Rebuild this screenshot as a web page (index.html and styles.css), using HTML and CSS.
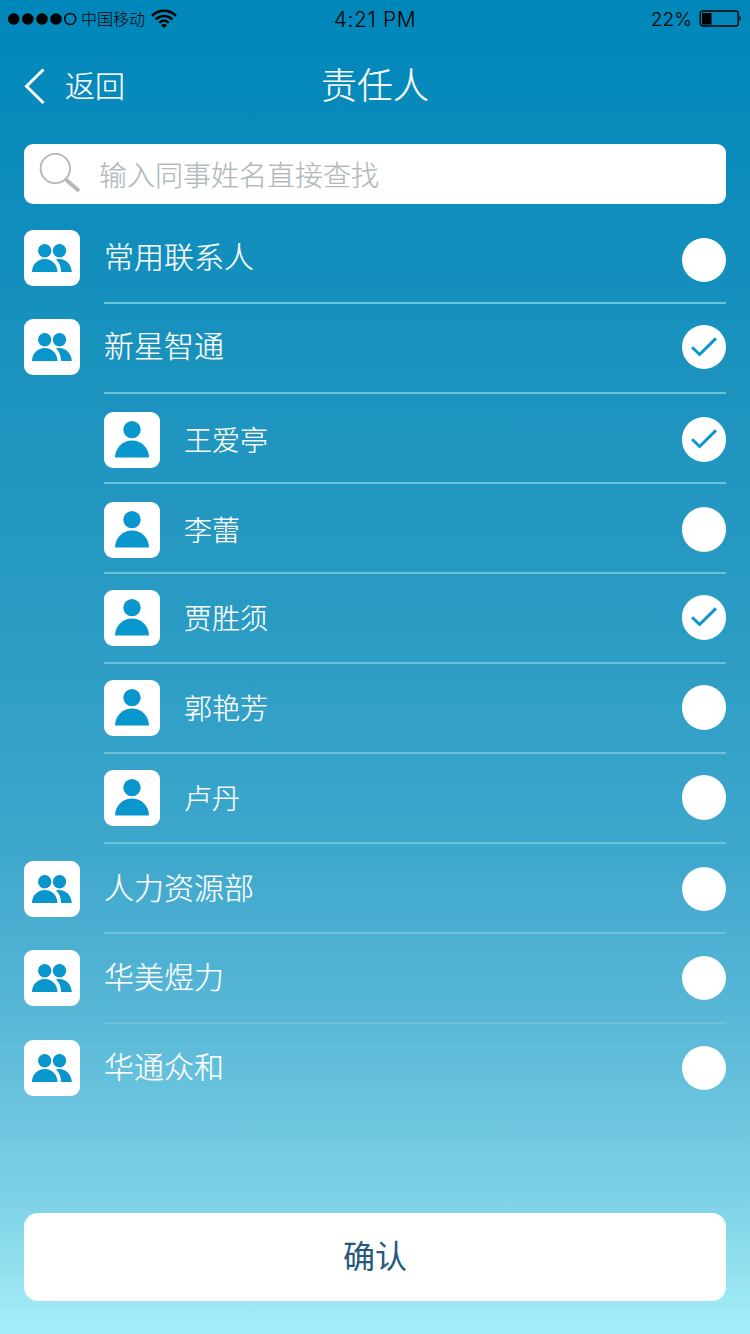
FILE: index.html
```
<!DOCTYPE html>
<html lang="zh-CN">
<head>
  <meta charset="utf-8">
  <title>责任人</title>
  <link rel="stylesheet" href="styles.css">
</head>
<body>

<!-- shared icons -->
<svg class="sprite">
  <symbol id="group" viewBox="0 0 56 56">
    <circle cx="20.7" cy="20.8" r="6.7"/>
    <circle cx="35.5" cy="20.8" r="6.7"/>
    <path d="M8 42C8 34.5 13.5 29 20.8 29S33.3 34.5 33.5 42z"/>
    <path d="M32 29.4C41 27.6 47.5 34 47.8 42H37C37 36.5 35.5 32.5 32 29.4z"/>
  </symbol>
  <symbol id="person" viewBox="0 0 56 56">
    <circle cx="28" cy="17.6" r="8.7"/>
    <path d="M11 45.4a17 17 0 0 1 34 0z"/>
  </symbol>
  <symbol id="tick" viewBox="0 0 45 45">
    <path d="M10.2 22.5L17.8 29.8L34.3 13.5" fill="none" stroke="#0896cc" stroke-width="3"/>
  </symbol>
</svg>

<div class="screen">
  <div class="status">
    <div class="status-left">
      <svg class="signal" width="70" height="14">
        <circle cx="5.7" cy="7" r="5.8"/>
        <circle cx="19.8" cy="7" r="5.8"/>
        <circle cx="34" cy="7" r="5.8"/>
        <circle cx="48" cy="7" r="5.8"/>
        <circle cx="62.2" cy="7" r="5.5" fill="none" stroke="#000" stroke-width="1.4"/>
      </svg>
      <span class="carrier">中国移动</span>
      <svg class="wifi" width="26" height="20" viewBox="0 0 26 20" fill="none" stroke="#000" stroke-width="2.5">
        <path d="M1 6.8C8 .2 18 .2 25 6.8"/>
        <path d="M4.7 10.3C9.5 5.8 16.5 5.8 21.3 10.3"/>
        <path d="M8.3 13.8C11 11.2 15 11.2 17.7 13.8"/>
        <path d="M10 16.2Q13 13.8 16 16.2L13 19z" fill="#000" stroke="none"/>
      </svg>
    </div>
    <span class="time">4:21 PM</span>
    <div class="status-right">
      <span>22%</span>
      <svg width="44" height="18" viewBox="0 0 44 18">
        <rect x="1.2" y="1" width="38" height="15" rx="2.5" fill="none" stroke="#000" stroke-width="1.4"/>
        <rect x="3" y="3" width="9.5" height="11.5"/>
        <path d="M40.5 5.8q3 2.700 0 5.400z"/>
      </svg>
    </div>
  </div>

  <div class="header">
    <div class="back">
      <svg width="22" height="36" viewBox="0 0 22 36"><path d="M19.5 1.5L2.5 18.3L19.5 35" fill="none" stroke="#fff" stroke-width="3"/></svg>
      <span>返回</span>
    </div>
    <h1>责任人</h1>
  </div>

  <div class="search">
    <svg width="44" height="42" viewBox="0 0 44 42" fill="none" stroke="#b0b9bc">
      <circle cx="17.3" cy="15.5" r="14.7" stroke-width="1.9"/>
      <path d="M27.5 26.3L41 38" stroke-width="3.8"/>
    </svg>
    <span>输入同事姓名直接查找</span>
  </div>

  <div class="list">
    <div class="row">
      <svg class="icon"><use href="#group"/></svg>
      <div class="line"><span class="name">常用联系人</span><span class="check low"></span></div>
    </div>
    <div class="row up">
      <svg class="icon"><use href="#group"/></svg>
      <div class="line"><span class="name">新星智通</span><svg class="check"><use href="#tick"/></svg></div>
    </div>
    <div class="row member down">
      <div class="line"><svg class="icon"><use href="#person"/></svg><span class="name">王爱亭</span><svg class="check"><use href="#tick"/></svg></div>
    </div>
    <div class="row member down">
      <div class="line"><svg class="icon"><use href="#person"/></svg><span class="name">李蕾</span><span class="check"></span></div>
    </div>
    <div class="row member">
      <div class="line"><svg class="icon"><use href="#person"/></svg><span class="name">贾胜须</span><svg class="check"><use href="#tick"/></svg></div>
    </div>
    <div class="row member">
      <div class="line"><svg class="icon"><use href="#person"/></svg><span class="name">郭艳芳</span><span class="check"></span></div>
    </div>
    <div class="row member">
      <div class="line"><svg class="icon"><use href="#person"/></svg><span class="name">卢丹</span><span class="check"></span></div>
    </div>
    <div class="row mid">
      <svg class="icon"><use href="#group"/></svg>
      <div class="line"><span class="name">人力资源部</span><span class="check"></span></div>
    </div>
    <div class="row">
      <svg class="icon"><use href="#group"/></svg>
      <div class="line"><span class="name">华美煜力</span><span class="check"></span></div>
    </div>
    <div class="row last">
      <svg class="icon"><use href="#group"/></svg>
      <div class="line"><span class="name">华通众和</span><span class="check"></span></div>
    </div>
  </div>

  <button class="confirm">确认</button>
</div>

</body>
</html>
```
FILE: styles.css
```
* {
  box-sizing: border-box;
}

body {
  margin: 0;
  font-family: "Noto Sans CJK SC", sans-serif;
  font-weight: 300;
  color: #fff;
}

.sprite {
  display: none;
}

svg {
  display: block;
  flex: none;
}

.screen {
  display: flex;
  flex-direction: column;
  width: 750px;
  height: 1334px;
  padding: 0 24px 33px;
  background: linear-gradient(#0087ba 0, #0689bb 90px, #1a92be 360px, #2b9cc4 640px, #3ea7cc 850px, #58b7d7 1015px, #7bd0e5 1190px, #9fe9f5 1310px, #a5edf8 1334px);
}

.status {
  display: grid;
  grid-template-columns: 1fr auto 1fr;
  align-items: center;
  height: 38px;
  margin: 0 -16px;
  color: #000;
}

.time {
  font-family: Inter, sans-serif;
  font-size: 21px;
  font-weight: 300;
  letter-spacing: 0.6px;
}

.status-left,
.status-right {
  display: flex;
  align-items: center;
}

.status-right {
  justify-content: flex-end;
  gap: 7px;
  margin-right: -1px;
  font-family: Inter, sans-serif;
  font-size: 19px;
  font-weight: 300;
}

.carrier {
  margin: 0 6px 0 3px;
  padding-bottom: 3px;
  font-size: 16px;
  line-height: 20px;
}

.header {
  display: grid;
  grid-template-columns: 1fr auto 1fr;
  align-items: center;
  height: 98px;
  margin-bottom: 8px;
}

.back {
  display: flex;
  align-items: center;
  gap: 19px;
  padding-bottom: 2px;
  font-size: 30px;
}

.back span {
  line-height: 40px;
  padding-bottom: 4px;
}

h1 {
  margin: 0;
  padding-bottom: 8px;
  font-size: 36px;
  font-weight: inherit;
  line-height: 50px;
}

.back,
h1,
.search,
.name {
  -webkit-text-stroke: 0.2px currentColor;
}

.search {
  display: flex;
  align-items: center;
  gap: 17px;
  height: 60px;
  padding-left: 14px;
  margin-bottom: 10px;
  border-radius: 9px;
  background: #fff;
  color: #b0b9bc;
  font-size: 28px;
}

.row {
  --top: 16px;
  display: flex;
  gap: 24px;
  height: 90px;
}

.row.up {
  --top: 15px;
}

.row.mid {
  --top: 17px;
}

.row.down {
  --top: 18px;
}

.row.member {
  padding-left: 80px;
}

.icon {
  width: 56px;
  height: 56px;
  margin-top: var(--top);
  border-radius: 9px;
  background: #fff;
  fill: #0896cc;
}

.line {
  flex: 1;
  display: flex;
  align-items: flex-start;
  border-bottom: 2px solid #6bc2da;
}

.last .line {
  border-bottom: none;
}

.name {
  flex: 1;
  margin-top: var(--top);
  font-size: 30px;
  line-height: 50px;
}

.member .name {
  margin-left: 24px;
  font-size: 28px;
  line-height: 54px;
}

.check {
  width: 44.5px;
  height: 44.5px;
  margin: calc(var(--top) + 5.7px) -0.2px 0 0;
  border-radius: 50%;
  background: #fff;
}

.member .check {
  margin-top: calc(var(--top) + 5.3px);
}

.check.low {
  margin-top: calc(var(--top) + 7.7px);
}

.confirm {
  height: 88px;
  padding-bottom: 7px;
  margin-top: auto;
  border: none;
  border-radius: 14px;
  background: #fff;
  color: #265a7c;
  font-family: inherit;
  font-size: 32px;
}
```
